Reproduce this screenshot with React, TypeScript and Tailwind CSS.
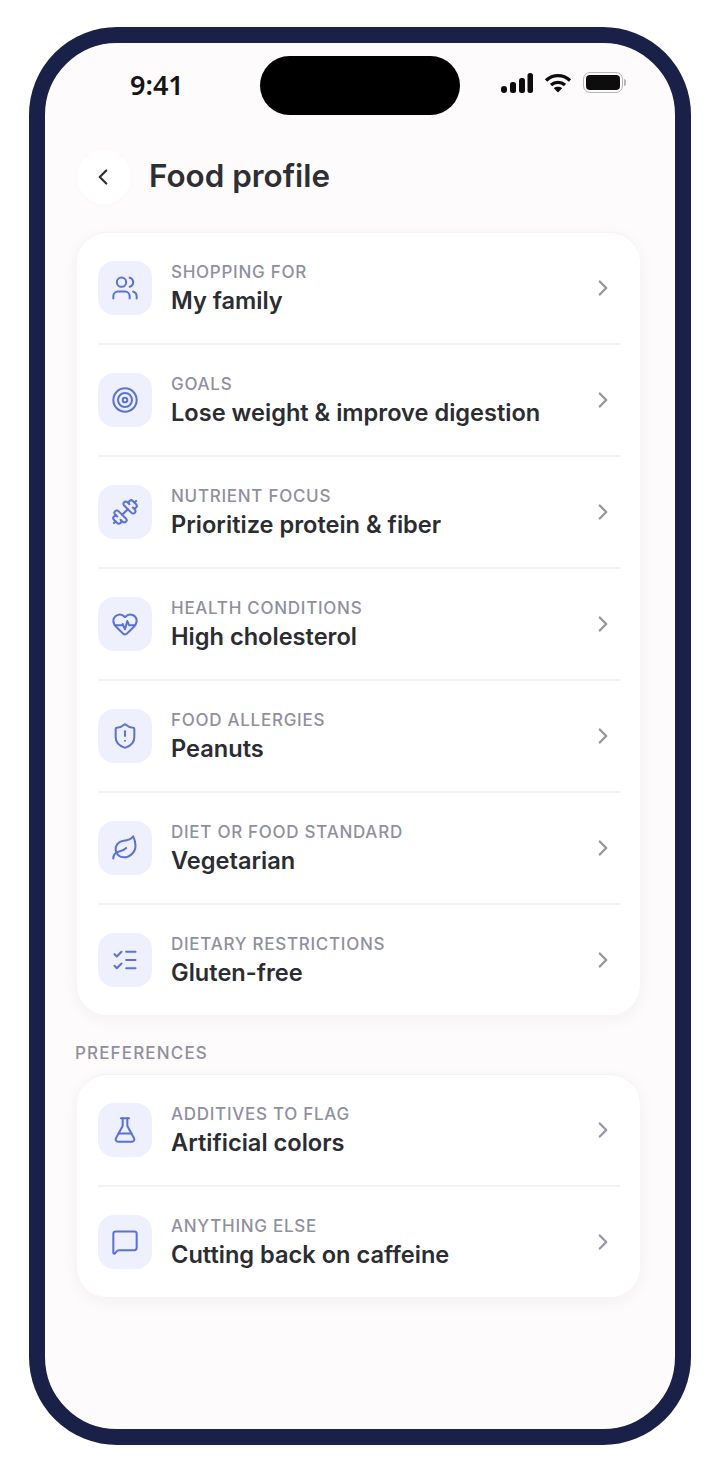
import React from "react";
import { Users, Target, Dumbbell, HeartPulse, ShieldAlert, Leaf, ListChecks, FlaskConical, MessageSquare, ChevronRight, ChevronLeft } from "lucide-react";

type RowData = { icon: React.ElementType; label: string; value: string };

const main: RowData[] = [
  { icon: Users, label: "SHOPPING FOR", value: "My family" },
  { icon: Target, label: "GOALS", value: "Lose weight & improve digestion" },
  { icon: Dumbbell, label: "NUTRIENT FOCUS", value: "Prioritize protein & fiber" },
  { icon: HeartPulse, label: "HEALTH CONDITIONS", value: "High cholesterol" },
  { icon: ShieldAlert, label: "FOOD ALLERGIES", value: "Peanuts" },
  { icon: Leaf, label: "DIET OR FOOD STANDARD", value: "Vegetarian" },
  { icon: ListChecks, label: "DIETARY RESTRICTIONS", value: "Gluten-free" },
];
const prefs: RowData[] = [
  { icon: FlaskConical, label: "ADDITIVES TO FLAG", value: "Artificial colors" },
  { icon: MessageSquare, label: "ANYTHING ELSE", value: "Cutting back on caffeine" },
];

function Row({ icon: Icon, label, value, last }: RowData & { last: boolean }) {
  return (
    <div className={last ? "flex h-[110px] items-center pr-[20px] pl-[21px]" : "flex h-[112px] items-center pr-[20px] pl-[21px]"}>
      <div className={last ? "flex h-full w-full items-center" : "flex h-full w-full items-center border-b-2 border-[#f2f1f3]"}>
        <div className="flex h-[54px] w-[54px] shrink-0 items-center justify-center rounded-[16px] bg-[#eef1fd]">
          <Icon size={28} strokeWidth={1.75} className="text-[#5a72d4]" />
        </div>
        <div className="ml-[19px] flex min-w-0 flex-1 flex-col">
          <span className="text-[17px] leading-[24px] font-medium tracking-[0.72px] whitespace-nowrap text-[#8f8f9f]">{label}</span>
          <span className="mt-[2px] text-[23.6px] leading-[30px] font-semibold whitespace-nowrap text-[#2c2c33]">{value}</span>
        </div>
        <ChevronRight size={26} strokeWidth={2.1} className="mr-[4px] text-[#95959f]" />
      </div>
    </div>
  );
}

function Card({ rows }: { rows: RowData[] }) {
  return (
    <div className="w-[563px] rounded-[30px] border-t border-[#f4f2f4] bg-white shadow-[0_4px_18px_rgba(40,30,60,0.05)]">
      {rows.map((r, i) => (
        <Row key={r.label} {...r} last={i === rows.length - 1} />
      ))}
    </div>
  );
}

export default function App() {
  return (
    <div className="h-[1472px] w-[720px] bg-white pt-[27px] pl-[29px] font-['Inter',sans-serif]">
      <div className="h-[1418px] w-[662px] rounded-[88px] border-[16px] border-[#1a2149] bg-[#fdfbfc] pl-[32px]">
        <div className="flex h-[72px] items-center pt-[13px]">
          <span className="mb-[2px] ml-[53px] w-[130px] font-['Noto_Sans',sans-serif] text-[27px] leading-none font-semibold text-[#151515]">9:41</span>
          <div className="h-[59px] w-[200px] rounded-full bg-black" />
          <div className="mb-[6px] ml-[41px] flex items-center gap-[11px]">
            <svg width="32" height="20" viewBox="0 0 32 20" fill="#0d0d0d">
              <rect x="0" y="13" width="6" height="7" rx="3" />
              <rect x="9" y="9" width="6" height="11" rx="2.5" />
              <rect x="18" y="5" width="6" height="15" rx="2.5" />
              <rect x="26.5" y="0" width="5.5" height="20" rx="2.5" />
            </svg>
            <svg width="28" height="20" viewBox="0 0 28 20" fill="none" stroke="#0d0d0d" strokeWidth="3.4">
              <path d="M2 7.5C9 1 19 1 26 7.5" />
              <path d="M7 12C11 8.5 17 8.5 21 12" />
              <path d="M14 19.5L9.8 15.2C12 13.4 16 13.4 18.2 15.2Z" fill="#0d0d0d" stroke="none" />
            </svg>
            <div className="flex items-center">
              <div className="h-[21px] w-[40px] rounded-[7px] border-[1.5px] border-[#b5b5b5] p-[2px]">
                <div className="h-full w-full rounded-[4px] bg-[#0d0d0d]" />
              </div>
              <div className="ml-[1px] h-[7px] w-[2px] rounded-r-sm bg-[#b5b5b5]" />
            </div>
          </div>
        </div>
        <div className="flex h-[117px] items-center pt-[7px]">
          <div className="flex h-[54px] w-[54px] items-center justify-center rounded-full bg-white shadow-[0_1px_6px_rgba(40,30,60,0.02)]">
            <ChevronLeft size={26} strokeWidth={2} className="mr-[3px] text-[#2c2c33]" />
          </div>
          <h1 className="ml-[18px] text-[31.4px] leading-none font-semibold whitespace-nowrap text-[#2e2e35]">Food profile</h1>
        </div>
        <Card rows={main} />
        <div className="mt-[28px] mb-[11px] -ml-[2px] text-[17px] leading-[20px] font-medium tracking-[1.15px] text-[#8f8f9f]">PREFERENCES</div>
        <Card rows={prefs} />
      </div>
    </div>
  );
}
